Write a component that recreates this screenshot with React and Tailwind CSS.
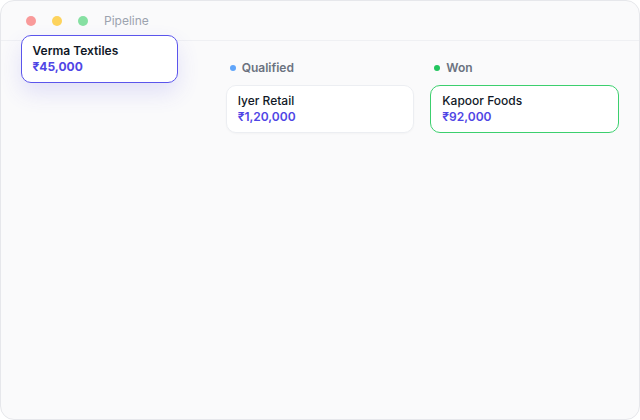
import React from "react";

// first column's header sits under the drag overlay, so it is left blank
const columns = [
  { id: "new", name: "", dot: "", deals: [] },
  {
    id: "qualified",
    name: "Qualified",
    dot: "bg-[#60a5fa]",
    deals: [{ name: "Iyer Retail", amount: "₹1,20,000" }],
  },
  {
    id: "won",
    name: "Won",
    dot: "bg-[#22c55e]",
    deals: [{ name: "Kapoor Foods", amount: "₹92,000", won: true }],
  },
];

const DealCard = ({ deal }) => (
  <div
    className={
      deal.won
        ? "h-12 rounded-[10px] border-[1.5px] border-[#3ccf6e] bg-white px-[11px] pt-[6.5px]"
        : "h-12 rounded-[10px] border border-[#eceef2] bg-white px-[11px] pt-[7px] shadow-[0_1px_2px_rgba(17,24,39,0.03)]"
    }
  >
    <div className="text-[12px] leading-4 font-medium text-[#111827]">{deal.name}</div>
    <div className="text-[12px] leading-4 font-semibold text-[#4f46e5]">{deal.amount}</div>
  </div>
);

export default function App() {
  return (
    <div
      className="relative w-[640px] h-[420px] overflow-hidden rounded-[14px] border border-[#e6e7eb] bg-[#fafafb]"
      style={{ fontFamily: "Inter, 'Noto Sans', sans-serif" }}
    >
      {/* window chrome */}
      <div className="flex h-10 items-center gap-4 border-b border-[#eff0f3] px-[25px]">
        <span className="h-[10px] w-[10px] rounded-full bg-[#f99a9a]" />
        <span className="h-[10px] w-[10px] rounded-full bg-[#fdd35d]" />
        <span className="h-[10px] w-[10px] rounded-full bg-[#86e0a2]" />
        <span className="text-[12px] text-[#9ca3af]">Pipeline</span>
      </div>

      {/* board */}
      <div className="grid grid-cols-3 gap-4 px-5 pt-[18px]">
        {columns.map((col) => (
          <div key={col.id} className="flex flex-col gap-2">
            <div className="flex h-[18px] items-center gap-[6px] pl-1">
              {col.name && (
                <>
                  <span className={`h-[6px] w-[6px] rounded-full ${col.dot}`} />
                  <span className="text-[12px] font-semibold text-[#6b7280]">{col.name}</span>
                </>
              )}
            </div>
            {col.deals.map((d) => (
              <DealCard key={d.name} deal={d} />
            ))}
          </div>
        ))}
      </div>

      {/* card being dragged */}
      <div className="absolute left-5 top-[34px] h-12 w-[157px] rounded-[10px] border-[1.5px] border-[#5b55ec] bg-white px-[10.5px] pt-[6.5px] shadow-[0_10px_22px_rgba(79,70,229,0.14)]">
        <div className="text-[12px] leading-4 font-semibold text-[#111827]">Verma Textiles</div>
        <div className="text-[12px] leading-4 font-bold text-[#4f46e5]">₹45,000</div>
      </div>
    </div>
  );
}
